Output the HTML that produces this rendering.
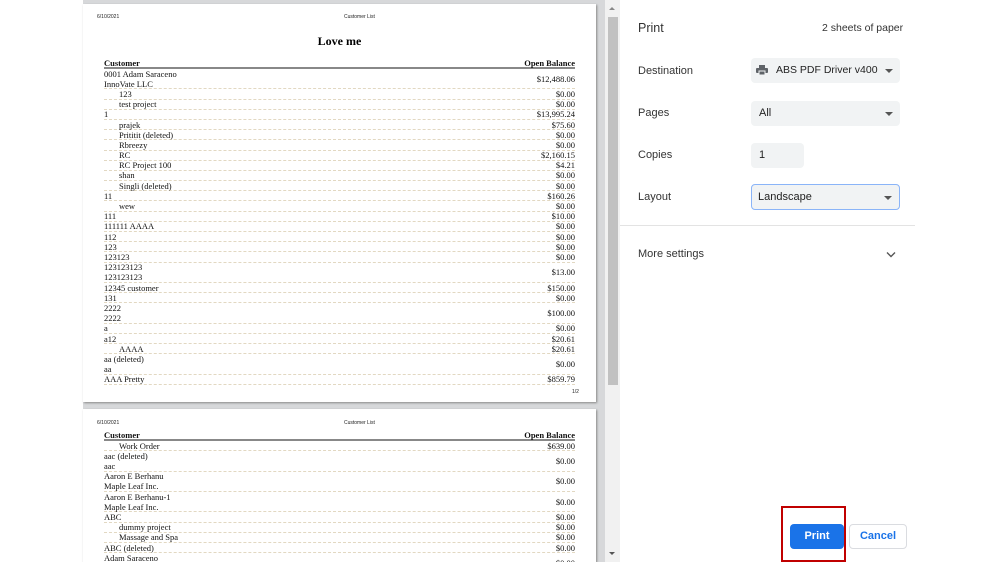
<!DOCTYPE html>
<html style="overflow:hidden;width:999px;height:562px"><head><meta charset="utf-8"><style>
*{margin:0;padding:0;box-sizing:border-box}
body{width:999px;height:562px;overflow:hidden;background:#fff;position:relative;font-family:"Liberation Sans",sans-serif}
.gray{position:absolute;left:83px;top:0;width:522px;height:562px;background:#d7d8da}
.page{position:absolute;left:83px;width:513px;background:#fff;box-shadow:1px 1px 2px #888;overflow:hidden}
.sb{position:absolute;left:605px;top:0;width:15px;height:562px;background:#f1f1f1}
.thumb{position:absolute;left:608px;top:17px;width:10px;height:368px;background:#c1c1c1}
.hdr{position:absolute;font-size:5px;color:#222}
.tbl{position:absolute;left:21px;width:471px;font-family:"Liberation Serif",serif;font-size:8.5px;color:#111}
.r{display:flex;justify-content:space-between;align-items:center;height:10.2px;line-height:10px;border-bottom:1px dashed #e2d8c2}
.r.d{height:20.4px}
.r.h{font-weight:bold;height:11px;border-bottom:2px solid #888}
.in{padding-left:15px}
.lbl{position:absolute;left:638px;font-size:11px;color:#333}
.sel{position:absolute;left:751px;width:149px;height:25px;background:#f1f3f4;border-radius:4px;font-size:11px;color:#222;line-height:25px;padding-left:8px;white-space:nowrap}
.arr{position:absolute;right:7px;top:11px;border-left:4px solid transparent;border-right:4px solid transparent;border-top:4px solid #555}
</style></head><body>
<div class="gray"></div>
<div class="page" style="top:4px;height:398px">
 <div class="hdr" style="left:14px;top:10px">6/10/2021</div>
 <div class="hdr" style="left:261px;top:10px">Customer List</div>
 <div style="position:absolute;left:0;width:513px;top:30px;text-align:center;font-family:'Liberation Serif',serif;font-weight:bold;font-size:12px">Love me</div>
 <div class="tbl" style="top:54px">
  <div class="r h"><span>Customer</span><span>Open Balance</span></div>
  <div class="r d"><span>0001 Adam Saraceno<br>InnoVate LLC</span><span>$12,488.06</span></div>
  <div class="r"><span class="in">123</span><span>$0.00</span></div>
  <div class="r"><span class="in">test project</span><span>$0.00</span></div>
  <div class="r"><span>1</span><span>$13,995.24</span></div>
  <div class="r"><span class="in">prajek</span><span>$75.60</span></div>
  <div class="r"><span class="in">Prititit (deleted)</span><span>$0.00</span></div>
  <div class="r"><span class="in">Rbreezy</span><span>$0.00</span></div>
  <div class="r"><span class="in">RC</span><span>$2,160.15</span></div>
  <div class="r"><span class="in">RC Project 100</span><span>$4.21</span></div>
  <div class="r"><span class="in">shan</span><span>$0.00</span></div>
  <div class="r"><span class="in">Singli (deleted)</span><span>$0.00</span></div>
  <div class="r"><span>11</span><span>$160.26</span></div>
  <div class="r"><span class="in">wew</span><span>$0.00</span></div>
  <div class="r"><span>111</span><span>$10.00</span></div>
  <div class="r"><span>111111 AAAA</span><span>$0.00</span></div>
  <div class="r"><span>112</span><span>$0.00</span></div>
  <div class="r"><span>123</span><span>$0.00</span></div>
  <div class="r"><span>123123</span><span>$0.00</span></div>
  <div class="r d"><span>123123123<br>123123123</span><span>$13.00</span></div>
  <div class="r"><span>12345 customer</span><span>$150.00</span></div>
  <div class="r"><span>131</span><span>$0.00</span></div>
  <div class="r d"><span>2222<br>2222</span><span>$100.00</span></div>
  <div class="r"><span>a</span><span>$0.00</span></div>
  <div class="r"><span>a12</span><span>$20.61</span></div>
  <div class="r"><span class="in">AAAA</span><span>$20.61</span></div>
  <div class="r d"><span>aa (deleted)<br>aa</span><span>$0.00</span></div>
  <div class="r"><span>AAA Pretty</span><span>$859.79</span></div>
 </div>
 <div class="hdr" style="left:489px;top:385px">1/2</div>
</div>
<div class="page" style="top:409px;height:153px">
 <div class="hdr" style="left:14px;top:11px">6/10/2021</div>
 <div class="hdr" style="left:261px;top:11px">Customer List</div>
 <div class="tbl" style="top:21px">
  <div class="r h"><span>Customer</span><span>Open Balance</span></div>
  <div class="r"><span class="in">Work Order</span><span>$639.00</span></div>
  <div class="r d"><span>aac (deleted)<br>aac</span><span>$0.00</span></div>
  <div class="r d"><span>Aaron E Berhanu<br>Maple Leaf Inc.</span><span>$0.00</span></div>
  <div class="r d"><span>Aaron E Berhanu-1<br>Maple Leaf Inc.</span><span>$0.00</span></div>
  <div class="r"><span>ABC</span><span>$0.00</span></div>
  <div class="r"><span class="in">dummy project</span><span>$0.00</span></div>
  <div class="r"><span class="in">Massage and Spa</span><span>$0.00</span></div>
  <div class="r"><span>ABC (deleted)</span><span>$0.00</span></div>
  <div class="r d"><span>Adam Saraceno<br>&nbsp;</span><span>$0.00</span></div>
 </div>
</div>
<div class="sb"></div><div class="thumb"></div>
<div style="position:absolute;left:609px;top:7px;border-left:3px solid transparent;border-right:3px solid transparent;border-bottom:3px solid #888"></div>
<div style="position:absolute;left:609px;top:552px;border-left:3px solid transparent;border-right:3px solid transparent;border-top:3px solid #555"></div>

<div class="lbl" style="top:21px;font-size:12.5px">Print</div>
<div class="lbl" style="left:822px;top:22px;font-size:10.5px">2 sheets of paper</div>
<div class="lbl" style="top:65px">Destination</div>
<div class="sel" style="top:58px;padding-left:25px;font-size:10.5px">ABS PDF Driver v400
 <svg style="position:absolute;left:5px;top:7px" width="12" height="11" viewBox="0 0 12 11"><rect x="3" y="0" width="6" height="3" fill="#5f6368"/><rect x="0" y="3" width="12" height="5" rx="1" fill="#5f6368"/><rect x="3" y="6" width="6" height="4" fill="#5f6368" stroke="#f1f3f4" stroke-width="1"/></svg>
 <div class="arr"></div></div>
<div class="lbl" style="top:107px">Pages</div>
<div class="sel" style="top:101px">All<div class="arr"></div></div>
<div class="lbl" style="top:149px">Copies</div>
<div class="sel" style="top:143px;width:53px">1</div>
<div class="lbl" style="top:191px">Layout</div>
<div class="sel" style="top:184px;height:26px;border:1px solid #8ab4f8;line-height:24px;padding-left:6px">Landscape<div class="arr"></div></div>
<div style="position:absolute;left:620px;top:225px;width:295px;height:1px;background:#e3e3e3"></div>
<div class="lbl" style="top:248px">More settings</div>
<svg style="position:absolute;left:886px;top:251px" width="10" height="7" viewBox="0 0 10 7"><path d="M1 1.5L5 5.5L9 1.5" fill="none" stroke="#555" stroke-width="1.4"/></svg>
<div style="position:absolute;left:790px;top:524px;width:54px;height:25px;background:#1a73e8;border-radius:4px;color:#fff;font-size:11px;font-weight:bold;text-align:center;line-height:25px">Print</div>
<div style="position:absolute;left:849px;top:524px;width:58px;height:25px;border:1px solid #dadce0;border-radius:4px;color:#1a73e8;font-size:11px;font-weight:bold;text-align:center;line-height:23px">Cancel</div>
<div style="position:absolute;left:781px;top:506px;width:65px;height:56px;border:2px solid #c00000"></div>
</body></html>
